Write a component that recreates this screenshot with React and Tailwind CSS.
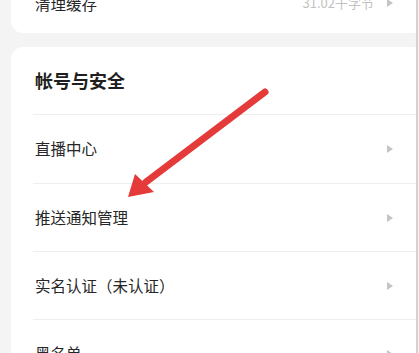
import React from "react";

const Tri = () => (
  <svg width="6" height="8" viewBox="0 0 6 8" className="shrink-0">
    <path d="M0 0 L6 4 L0 8 Z" fill="#c4c4c4" />
  </svg>
);

const Row = ({ label, first }) => (
  <div className={`h-[68px] flex items-center justify-between pr-[32px] ${first ? "" : "border-t border-[#efefef]"}`}>
    <span className="text-[15.5px] text-[#262626] pl-[2px]">{label}</span>
    <Tri />
  </div>
);

export default function App() {
  return (
    <div
      className="relative w-[419px] h-[353px] overflow-hidden flex bg-white"
      style={{ fontFamily: '"Noto Sans CJK SC", "Noto Sans", sans-serif' }}
    >
      <div className="flex-1 bg-[#f4f4f4] overflow-hidden pl-[11px]">
        <div className="w-[414px] flex flex-col">
          <div className="h-[33px] bg-white rounded-b-xl flex items-start justify-between pl-[24px] pr-[32px]">
            <span className="text-[15.5px] leading-[16px] -mt-[5px] text-[#262626]">清理缓存</span>
            <div className="flex items-center gap-[13px] -mt-[4px]">
              <span className="text-[13px] leading-[14px] text-[#c2c2c2]">31.02千字节</span>
              <Tri />
            </div>
          </div>
          <div className="mt-[14px] bg-white rounded-xl">
            <div className="h-[67px] flex items-center pl-[24px]">
              <span className="text-[18px] font-bold text-[#1f1f1f]">帐号与安全</span>
            </div>
            <div className="ml-[22px] border-t border-[#efefef]">
              <Row label="直播中心" first />
              <Row label="推送通知管理" />
              <Row label="实名认证（未认证）" />
              <Row label="黑名单" />
            </div>
          </div>
        </div>
      </div>
      <div className="w-[2px] bg-[#d2d2d2]" />
      <div className="w-[1px] bg-[#f7f7f7]" />
      <svg className="absolute left-0 top-0 pointer-events-none" width="419" height="353">
        <line x1="265" y1="92" x2="146" y2="182" stroke="#e53a3a" strokeWidth="7" strokeLinecap="round" />
        <path d="M128 197 L135 174 L154 192 Z" fill="#e53a3a" />
      </svg>
    </div>
  );
}
